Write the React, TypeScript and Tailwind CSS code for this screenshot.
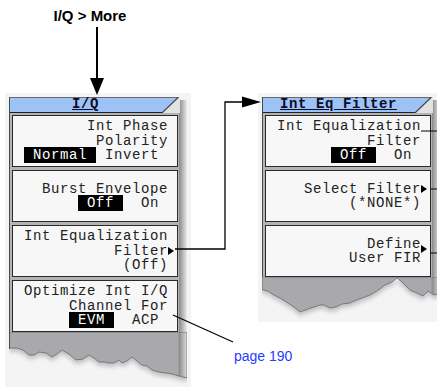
import React from "react";

const Tri = () => (
  <svg width="6" height="8" viewBox="0 0 6 8" className="block">
    <polygon points="0,0 6,4 0,8" fill="#000" />
  </svg>
);

function Hl({ children }: { children: React.ReactNode }) {
  return <span className="bg-black text-white">{children}</span>;
}

function Key({ children }: { children: React.ReactNode }) {
  return (
    <div className="h-[52px] border border-[#2a2a2a] bg-[#f7f7f7] flex flex-col justify-center items-end pr-[9px] text-[14px] leading-[14.5px] tracking-[0.6px] text-[#222] whitespace-pre font-['Liberation_Mono','DejaVu_Sans_Mono',monospace]">
      {children}
    </div>
  );
}

function ArrowLine({ text, top = 3 }: { text: string; top?: number }) {
  return (
    <div className="relative">
      {text}
      <span className={top === 3 ? "absolute left-full ml-[0px] top-[3px]" : "absolute left-full ml-[0px] top-[8px]"}>
        <Tri />
      </span>
    </div>
  );
}

function Panel({
  title,
  children,
  torn,
}: {
  title: string;
  children: React.ReactNode;
  torn: React.ReactNode;
}) {
  return (
    <div className="flex flex-col w-[178px]">
      <div className="flex">
        <div className="w-[170px] flex flex-col border-l border-[#4a4a4a]">
          <div className="relative h-[16px]">
            <svg className="absolute inset-0" width="170" height="16" viewBox="0 0 170 16">
              <polygon points="152,16 168,0 170,0 170,16" fill="#e2e2e2" />
              <polygon points="0,0 168,0 152,16 0,16" fill="#9dc3f6" />
              <line x1="0" y1="0.5" x2="168" y2="0.5" stroke="#6a6a6a" />
              <line x1="0" y1="15.5" x2="153" y2="15.5" stroke="#222" />
              <line x1="152" y1="16" x2="168.5" y2="0" stroke="#444" strokeWidth="1.2" />
            </svg>
            <div className="relative flex justify-center pr-[18px] text-[14px] tracking-[0.6px] leading-[15px] font-bold underline text-[#0b0b24] font-['Liberation_Mono','DejaVu_Sans_Mono',monospace]">
              {title}
            </div>
          </div>
          <div className="flex flex-col gap-[3px] pt-[2px] pl-[2px] pr-[1px] bg-[#b4b4b4]">
            {children}
          </div>
        </div>
        <div className="w-[8px] mt-[3px] bg-gradient-to-r from-[#8a8a8a] to-[#ececec]" />
      </div>
      {torn}
    </div>
  );
}

function Torn({ h, pts, leftLine }: { h: number; pts: string; leftLine?: number }) {
  return (
    <svg width="178" height={h} viewBox={`0 0 178 ${h}`} className="block">
      <defs>
        <filter id={`b${h}`} x="-10%" y="-10%" width="120%" height="140%">
          <feGaussianBlur stdDeviation="2.2" />
        </filter>
        <linearGradient id={`g${h}`} x1="0" x2="1" y1="0" y2="0">
          <stop offset="0" stopColor="#a9a9ab" />
          <stop offset="0.95" stopColor="#a9a9ab" />
          <stop offset="0.955" stopColor="#8a8a8a" />
          <stop offset="1" stopColor="#dcdcdc" />
        </linearGradient>
      </defs>
      <polygon points={pts} fill="#9a9a9a" opacity="0.55" transform="translate(0,4)" filter={`url(#b${h})`} />
      <polygon points={pts} fill={`url(#g${h})`} stroke="#66667a" strokeWidth="0.8" strokeLinejoin="round" />
      {leftLine ? <line x1="0.5" y1="0" x2="0.5" y2={leftLine} stroke="#4a4a4a" /> : null}
    </svg>
  );
}

const leftTorn =
  "0,0 178,0 178,46 170,44 163,42 157,41 150,40 143,38 138,34 133,33 128,29 123,25 118,29 113,31 110,28 105,31 100,31 95,30 90,30 85,26 80,23 74,27 67,28 60,22 53,18 48,22 43,25 37,21 30,20 25,23 20,23 14,18 8,16 0,16";

const rightTorn =
  "0,0 178,0 178,16 172,18 166,14 161,19 155,16 148,13 141,6 135,1 130,5 123,8 115,14 108,18 100,21 92,24 88,26 80,27 74,30 68,31 62,28 58,28 52,30 46,32 38,35 32,30 26,26 18,21 12,18 6,14 1,13 0,13";

export default function App() {
  return (
    <div className="relative w-[437px] h-[387px] bg-white overflow-hidden">
      <div className="absolute left-[5px] top-[93px] w-[186px] h-[294px] bg-[#f4f4f4]" />
      <div className="absolute left-[258px] top-[93px] w-[179px] h-[229px] bg-[#f4f4f4]" />

      <div className="absolute left-[30px] top-[5px] w-[120px] text-center text-[15px] font-bold text-black font-['Liberation_Sans',Arial,sans-serif]">
        I/Q &gt; More
      </div>

      <div className="absolute left-[9px] top-[97px]">
        <Panel title="I/Q" torn={<Torn h={55} pts={leftTorn} leftLine={17} />}>
          <Key>
            <div>Int Phase</div>
            <div>Polarity</div>
            <div>
              <Hl> Normal </Hl> Invert{" "}
            </div>
          </Key>
          <Key>
            <div>Burst Envelope</div>
            <div>
              <Hl> Off </Hl>  On{" "}
            </div>
          </Key>
          <Key>
            <div>Int Equalization</div>
            <ArrowLine text="Filter" />
            <div>(Off)</div>
          </Key>
          <Key>
            <div>Optimize Int I/Q</div>
            <div>Channel For</div>
            <div>
              <Hl> EVM </Hl>  ACP{" "}
            </div>
          </Key>
        </Panel>
      </div>

      <div className="absolute left-[262px] top-[97px]">
        <Panel title="Int Eq Filter" torn={<Torn h={45} pts={rightTorn} />}>
          <Key>
            <div>Int Equalization</div>
            <div>Filter</div>
            <div>
              <Hl> Off </Hl>  On{" "}
            </div>
          </Key>
          <Key>
            <ArrowLine text="Select Filter" />
            <div>(*NONE*)</div>
          </Key>
          <Key>
            <ArrowLine text="Define" top={8} />
            <div>User FIR</div>
          </Key>
        </Panel>
      </div>

      <svg className="absolute inset-0 pointer-events-none" width="437" height="387" viewBox="0 0 437 387">
        <line x1="97" y1="27" x2="97" y2="80" stroke="#000" strokeWidth="2" />
        <polygon points="90,78 104,78 97,95" fill="#000" />
        <path d="M175,249 H225 V102 H245" fill="none" stroke="#000" strokeWidth="1.3" />
        <polygon points="242,96.5 242,107.5 261,102" fill="#000" />
        <line x1="421" y1="131" x2="437" y2="131" stroke="#000" strokeWidth="1" />
        <line x1="430" y1="189" x2="437" y2="189" stroke="#000" strokeWidth="1" />
        <line x1="430" y1="253" x2="437" y2="253" stroke="#000" strokeWidth="1" />
        <line x1="173" y1="315" x2="233" y2="342" stroke="#000" strokeWidth="1.2" />
      </svg>

      <div className="absolute left-[234px] top-[346px] text-[14px] text-[#1f3cff] font-['Liberation_Sans',Arial,sans-serif]">
        page 190
      </div>
    </div>
  );
}
